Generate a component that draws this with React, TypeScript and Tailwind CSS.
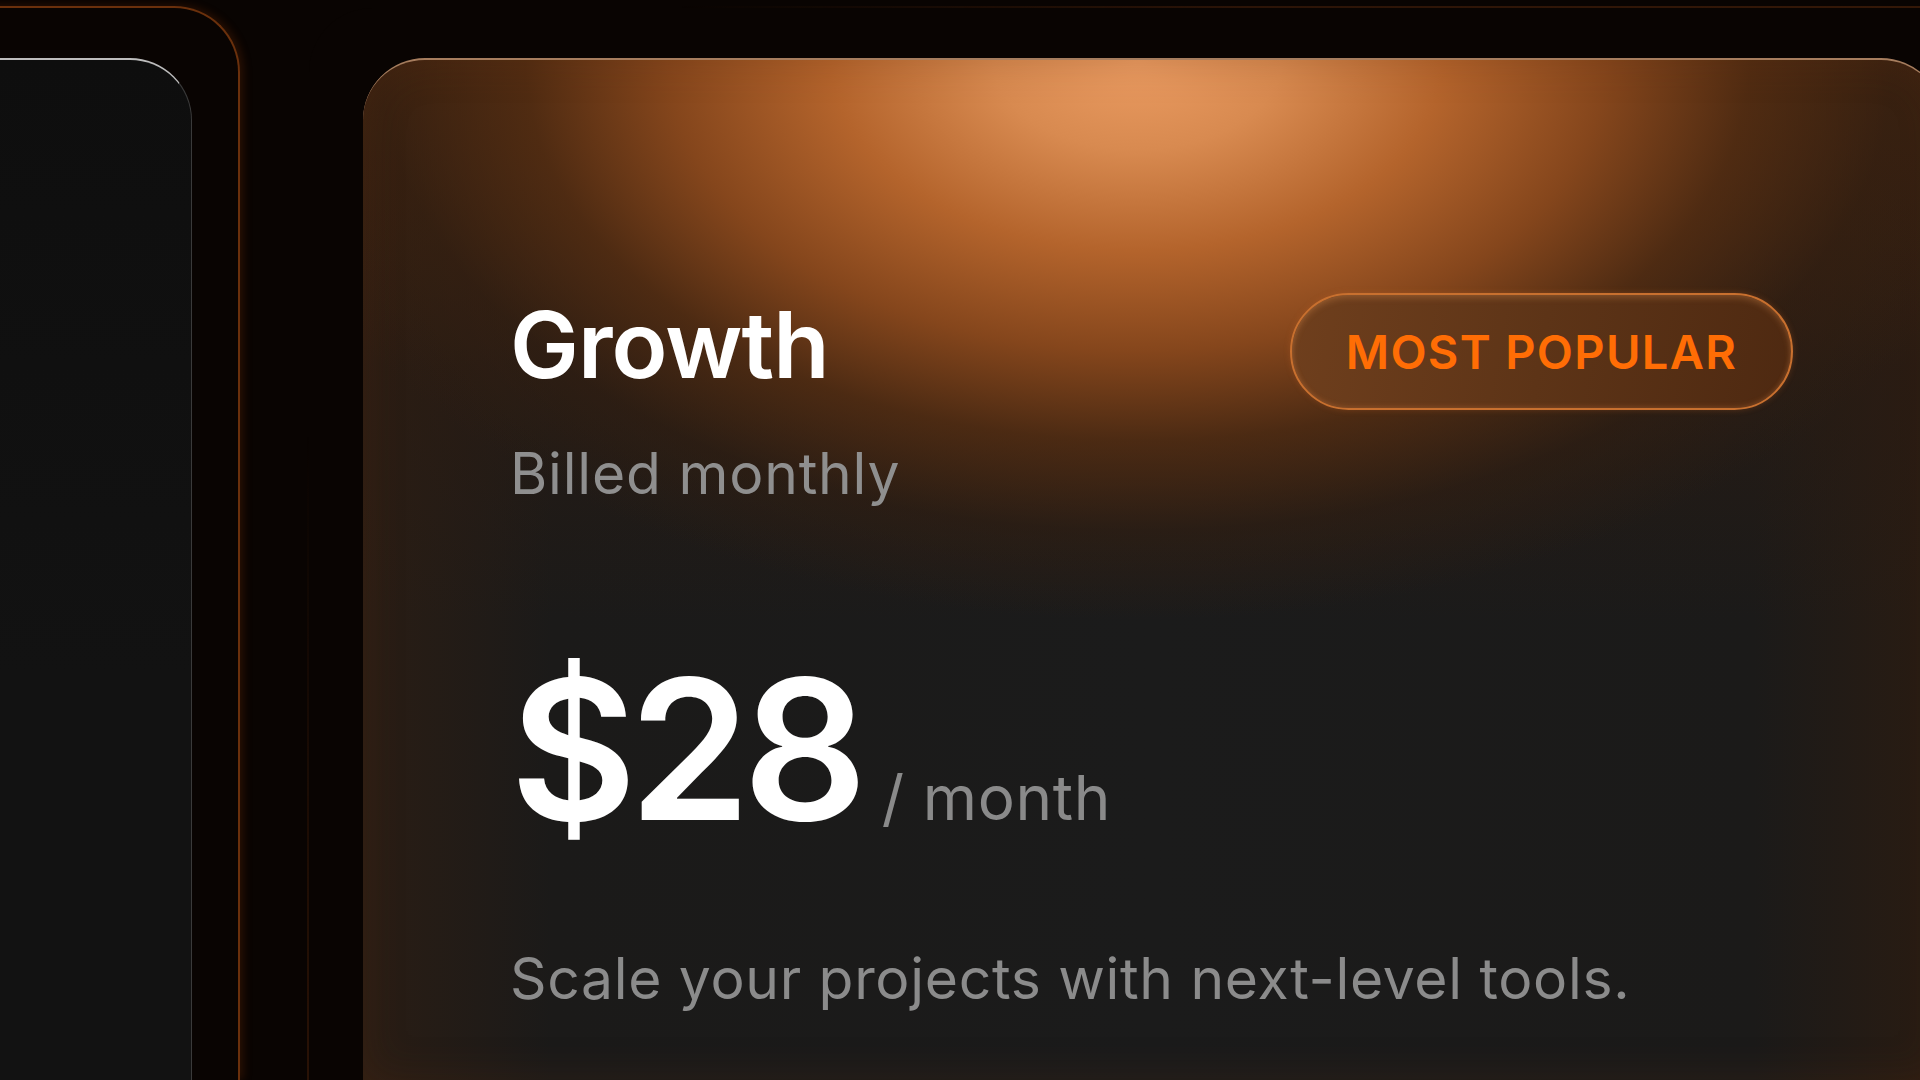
export default function App() {
  return (
    <div className="relative flex h-[1080px] w-[1920px] overflow-hidden bg-[#090402] font-['Inter',sans-serif]">
      {/* left framed card */}
      <div className="ml-[-260px] mt-[6px] flex w-[500px] shrink-0 rounded-tr-[66px] border-t-2 border-r-2 border-[#6a300c] pt-[50px] pr-[46px] shadow-[3px_0_10px_rgba(150,60,10,0.25)]">
        <div className="flex-1 rounded-tr-[62px] border-t-2 border-r border-t-[#bdbdbd] border-r-[#3a3a3a] bg-[linear-gradient(180deg,#0e0e0e_0%,#121212_60%,#121212_100%)]" />
      </div>

      {/* main frame */}
      <div className="ml-[67px] mt-[6px] flex w-[1700px] shrink-0 rounded-tl-[66px] bg-[linear-gradient(90deg,rgba(50,22,8,0)_0%,rgba(50,22,8,0)_22%,#2c1407_55%,#351807_100%),linear-gradient(180deg,rgba(45,20,6,0)_40%,rgba(45,20,6,0.9)_100%)] pt-[2px] pl-[2px]">
        <div className="flex flex-1 rounded-tl-[64px] bg-[#090402] pt-[50px] pl-[54px]">
          {/* main card */}
          <div className="flex w-[1580px] shrink-0 flex-col rounded-t-[62px] border-t-2 border-t-[#a67d5e] bg-[radial-gradient(ellipse_900px_560px_at_49%_0%,#eb9c62_0%,#d88a50_16%,#b4642c_34%,#85461c_52%,rgba(86,46,18,0.8)_68%,rgba(55,32,16,0.45)_84%,rgba(40,24,14,0)_100%),linear-gradient(180deg,rgba(60,34,16,0.95)_0%,rgba(44,28,18,0.6)_30%,rgba(27,27,27,0)_55%),linear-gradient(90deg,#2a1d14_0%,#1b1a19_12%,#1b1b1b_50%,#1b1a19_88%,#2a1c12_100%)] pt-[233px] pl-[147px] pr-[150px] shadow-[inset_0_0_40px_rgba(90,45,15,0.25)]">
            <div className="flex items-start justify-between">
              <h1 className="mt-[6px] text-[92px] font-semibold leading-none tracking-[-0.01em] text-white">
                Growth
              </h1>
              <div className="flex h-[117px] w-[503px] items-center justify-center rounded-full border-2 border-[#c8702f] bg-[linear-gradient(100deg,#6f3f1d_0%,#5d3417_50%,#4e2911_100%)] shadow-[inset_0_3px_6px_rgba(255,170,100,0.25),inset_0_-2px_5px_rgba(255,150,80,0.15),0_0_6px_rgba(200,100,40,0.3)]">
                <span className="text-[47px] font-semibold leading-none tracking-[0.028em] text-[#ff6d05]">
                  MOST POPULAR
                </span>
              </div>
            </div>

            <p className="mt-[35px] text-[57px] leading-none tracking-[0.014em] text-[#8f8f8f]">Billed monthly</p>

            <div className="mt-[150px] flex items-baseline">
              <span className="text-[195px] font-semibold leading-none tracking-[-0.04em] text-white">
                $28
              </span>
              <span className="ml-[22px] text-[62px] leading-none tracking-[0.01em] text-[#8a8a8a]">/ month</span>
            </div>

            <p className="mt-[103px] text-[57px] leading-none tracking-[0.012em] text-[#8b8b8b]">
              Scale your projects with next-level tools.
            </p>
          </div>
        </div>
      </div>
    </div>
  );
}
